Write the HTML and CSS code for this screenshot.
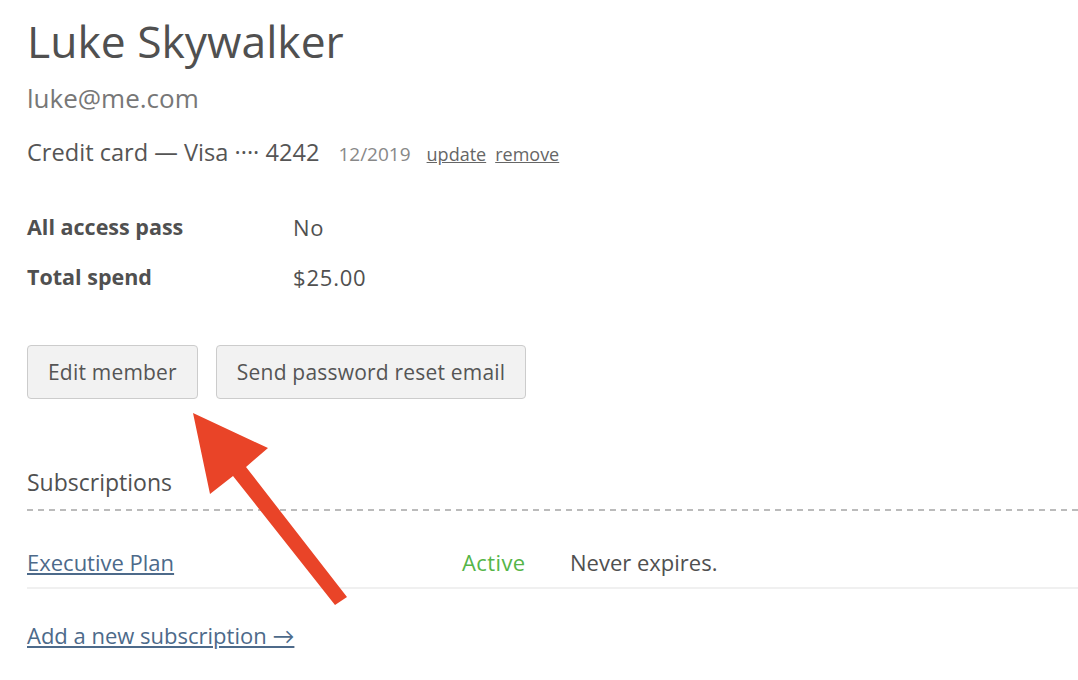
FILE: index.html
```html
<!DOCTYPE html>
<html>
<head>
<meta charset="utf-8">
<link rel="stylesheet" href="styles.css">
</head>
<body>
<div class="page">
  <h1 class="name">Luke Skywalker</h1>
  <div class="email">luke@me.com</div>
  <div class="card">
    <span class="card-main">Credit card — Visa ···· 4242</span>
    <span class="card-exp">12/2019</span>
    <a class="card-link" href="#">update</a>
    <a class="card-link" href="#">remove</a>
  </div>
  <div class="facts">
    <div class="fact-label">All access pass</div><div class="fact-value">No</div>
    <div class="fact-label">Total spend</div><div class="fact-value">$25.00</div>
  </div>
  <div class="actions">
    <button class="btn">Edit member</button>
    <button class="btn">Send password reset email</button>
  </div>
  <h2 class="section-title">Subscriptions</h2>
  <div class="dashed-rule"></div>
  <div class="sub-row">
    <a class="sub-name" href="#">Executive Plan</a>
    <span class="sub-status">Active</span>
    <span class="sub-expiry">Never expires.</span>
  </div>
  <a class="add-link" href="#">Add a new subscription →</a>
</div>
<svg class="arrow" width="1078" height="680" viewBox="0 0 1078 680">
  <polygon fill="#e94428" points="193,413 268,448 246,467 347,597 335,605 233,476 210,494"/>
</svg>
</body>
</html>
```

FILE: styles.css
```css
html, body {
  margin: 0;
  padding: 0;
  background: #fff;
}
body {
  font-family: "Open Sans", Lato, sans-serif;
  color: #555;
  position: relative;
  width: 1078px;
  height: 680px;
  overflow: hidden;
}
.page {
  padding: 16px 0 0 27px;
}
.name {
  margin: 0;
  font-size: 44.4px;
  font-weight: 400;
  line-height: 50px;
  color: #505050;
}
.email {
  margin-top: 17px;
  font-size: 26px;
  line-height: 30px;
  color: #777;
}
.card {
  margin-top: 24px;
  display: flex;
  align-items: baseline;
  line-height: 30px;
}
.card-main {
  font-size: 23.6px;
  color: #555;
}
.card-exp {
  margin-left: 19px;
  font-size: 19px;
  color: #888;
}
.card-link {
  margin-left: 16px;
  font-size: 18px;
  color: #666;
}
.card-link + .card-link {
  margin-left: 9px;
}
.facts {
  margin-top: 43px;
  display: grid;
  grid-template-columns: 266px auto;
  row-gap: 20px;
  font-size: 21.5px;
  line-height: 30px;
}
.fact-label {
  font-weight: 700;
  color: #505050;
}
.fact-value {
  color: #505050;
  font-size: 22px;
  letter-spacing: 0.8px;
}
.actions {
  margin-top: 53px;
  display: flex;
  gap: 18px;
}
.btn {
  height: 54px;
  padding: 0 20px;
  font-family: inherit;
  font-size: 21px;
  letter-spacing: 0.2px;
  color: #555;
  background: #f2f2f2;
  border: 1px solid #ccc;
  border-radius: 4px;
}
.section-title {
  margin: 68px 0 0;
  font-size: 23px;
  font-weight: 400;
  line-height: 30px;
  color: #505050;
}
.dashed-rule {
  margin-top: 12px;
  height: 2px;
  background: repeating-linear-gradient(to right, #bbb 0 6px, transparent 6px 11px);
}
.sub-row {
  display: flex;
  align-items: baseline;
  padding: 36px 0 10px;
  border-bottom: 2px solid #f0f0f0;
  font-size: 22px;
  line-height: 30px;
}
.sub-name {
  width: 435px;
  color: #4d6a8a;
}
.sub-status {
  width: 108px;
  color: #55b548;
  letter-spacing: 0.4px;
}
.sub-expiry {
  color: #505050;
}
.add-link {
  display: inline-block;
  margin-top: 31px;
  font-size: 22px;
  line-height: 30px;
  color: #4d6a8a;
}
.arrow {
  position: absolute;
  left: 0;
  top: 0;
  pointer-events: none;
}
```
